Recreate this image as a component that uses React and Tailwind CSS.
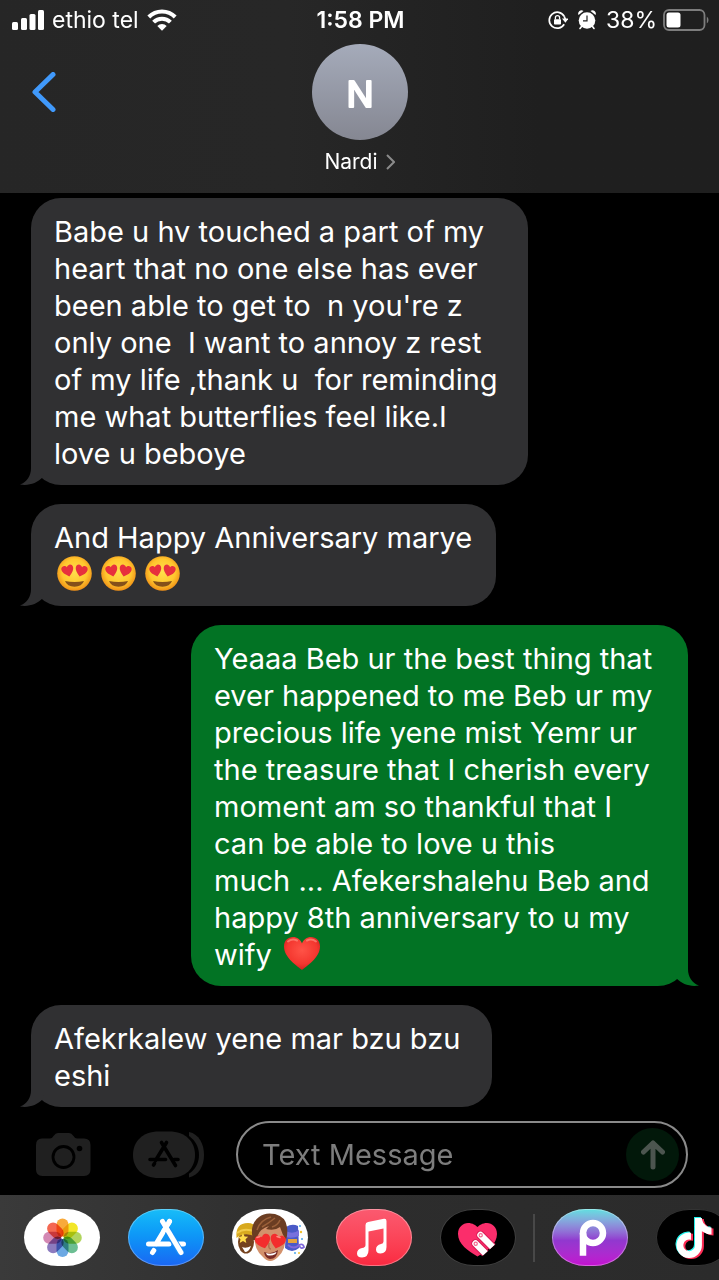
import React from "react";
import { FaTiktok } from "react-icons/fa6";

const HEART = "M12 21.5 C5 16 1 12 1 7.2 C1 3.6 3.7 1.5 6.5 1.5 C9 1.5 11 3 12 5 C13 3 15 1.5 17.5 1.5 C20.3 1.5 23 3.6 23 7.2 C23 12 19 16 12 21.5 Z";

function SignalIcon() {
  return (
    <svg className="h-5 w-8" viewBox="0 0 32 20" fill="#fff" aria-hidden="true">
      <rect x="0" y="12" width="6" height="8" rx="1.5" />
      <rect x="9" y="8" width="6" height="12" rx="1.5" />
      <rect x="17.500" y="4" width="6" height="16" rx="1.5" />
      <rect x="26" y="0" width="6" height="20" rx="1.5" />
    </svg>
  );
}

function WifiIcon() {
  return (
    <svg className="h-[22px] w-[30px]" viewBox="0 0 30 22" fill="none" stroke="#fff" strokeWidth="4" aria-hidden="true">
      <path d="M1.800 8 A18.500 18.500 0 0 1 28.200 8" />
      <path d="M6.600 13.200 A11.800 11.800 0 0 1 23.400 13.200" />
      <path d="M15 21.800 L10.300 17 A6.600 6.600 0 0 1 19.700 17 Z" fill="#fff" stroke="none" />
    </svg>
  );
}

function RotationLockIcon() {
  return (
    <svg className="h-5 w-5" viewBox="0 0 20 20" fill="none" aria-hidden="true">
      <path d="M16.200 6.200 A8 8 0 1 0 16.200 14.200" stroke="#fff" strokeWidth="1.700" />
      <path d="M14 8.500 H20.500 L17.400 12.800 Z" fill="#fff" />
      <path d="M16.200 6.200 L17.400 9.500" stroke="#fff" strokeWidth="1.700" />
      <rect x="6" y="9.200" width="7" height="5.300" rx="0.800" fill="#fff" />
      <path d="M7.400 9.500 V7.800 A2.100 2.100 0 0 1 11.600 7.800 V9.500" stroke="#fff" strokeWidth="1.300" />
    </svg>
  );
}

function AlarmIcon() {
  return (
    <svg className="h-5 w-[18px]" viewBox="0 0 18 20" aria-hidden="true">
      <path d="M0.500 5 A3.300 3.300 0 0 1 5.500 1 Z M17.500 5 A3.300 3.300 0 0 0 12.500 1 Z" fill="#fff" />
      <path d="M3.500 16.500 L2 18.500 M14.500 16.500 L16 18.500" stroke="#fff" strokeWidth="1.600" strokeLinecap="round" />
      <circle cx="9" cy="10.500" r="8.300" fill="#fff" />
      <path d="M9 5.500 V10.800 H5" stroke="#222" strokeWidth="1.200" fill="none" />
    </svg>
  );
}

function BatteryIcon() {
  return (
    <svg className="h-[22px] w-[46px]" viewBox="0 0 46 22" aria-hidden="true">
      <rect x="1" y="1" width="40.500" height="20" rx="5" fill="none" stroke="#7d7d7d" strokeWidth="1.800" />
      <rect x="3.500" y="3.500" width="14" height="15" rx="2.500" fill="#fff" />
      <path d="M43.800 7.500 Q45.500 8.500 45.500 11 Q45.500 13.500 43.800 14.500 Z" fill="#7d7d7d" />
    </svg>
  );
}

function HeartEyes() {
  return (
    <svg className="h-9 w-11" viewBox="0 0 44 36" role="img" aria-label="smiling face with heart eyes">
      <defs>
        <radialGradient id="face" cx="0.5" cy="0.45" r="0.56">
          <stop offset="0" stopColor="#ffdf4c" />
          <stop offset="0.65" stopColor="#ffc72e" />
          <stop offset="1" stopColor="#ef8d16" />
        </radialGradient>
      </defs>
      <circle cx="20.500" cy="17.500" r="17.300" fill="url(#face)" />
      <path d="M11 25 Q20.500 27.200 30 25 Q28 30.700 20.500 30.700 Q13 30.700 11 25 Z" fill="#84501a" />
      <g fill="#e7303d">
        <path d={HEART} transform="translate(5.800 10.300) rotate(-15) scale(0.550 0.570)" />
        <path d={HEART} transform="translate(22.400 6.900) rotate(15) scale(0.550 0.570)" />
      </g>
    </svg>
  );
}

function RedHeart() {
  return (
    <svg className="h-9 w-11" viewBox="0 0 44 36" role="img" aria-label="red heart">
      <defs>
        <radialGradient id="redheart" cx="0.5" cy="0.4" r="0.6">
          <stop offset="0" stopColor="#ff5347" />
          <stop offset="0.7" stopColor="#f4372f" />
          <stop offset="1" stopColor="#d3201f" />
        </radialGradient>
      </defs>
      <path d="M22 34 C18 30.500 4 22 4 10.500 C4 4.500 8 1 13 1 C17 1 20.500 3.500 22 7.500 C23.500 3.500 27 1 31 1 C36 1 40 4.500 40 10.500 C40 22 26 30.500 22 34 Z" fill="url(#redheart)" />
      <path d="M8 5.500 Q12 2.300 17 4.500 M27 4.500 Q32 2.300 36 5.500" fill="none" stroke="#ff9d8c" strokeWidth="2" strokeLinecap="round" opacity="0.6" />
    </svg>
  );
}

function Tail({ sent }) {
  return (
    <svg
      className={sent ? "absolute bottom-0 -right-[11px] h-8 w-6 -scale-x-100" : "absolute bottom-0 -left-[11px] h-8 w-6"}
      viewBox="0 0 24 32"
      fill={sent ? "#027324" : "#303032"}
      aria-hidden="true"
    >
      <path d="M11 0 V15 C11 23 7 29 0 31.500 C9 33 17 30 22.500 24.500 L24 20 V0 Z" />
    </svg>
  );
}

function Bubble({ sent, size, children }) {
  return (
    <li
      className={`relative rounded-[30px] pt-[15px] pb-[13px] pl-[23px] ${sent ? "self-end bg-[#027324]" : "self-start bg-[#303032]"} ${size}`}
    >
      <div className="text-[29px] leading-[37px] whitespace-pre">{children}</div>
      <Tail sent={sent} />
    </li>
  );
}

function CameraIcon() {
  return (
    <svg className="h-11 w-[55px]" viewBox="0 0 55 44" aria-hidden="true">
      <path d="M6 5.500 H14 Q16 5.500 17.500 3 Q19.500 0 22 0 H33 Q35.500 0 37.500 3 Q39 5.500 41 5.500 H48 Q54.500 5.500 54.500 12 V36.500 Q54.500 43 48 43 H6.500 Q0 43 0 36.500 V12 Q0 5.500 6 5.500 Z" fill="#202020" />
      <circle cx="27.500" cy="24" r="10.500" fill="none" stroke="#000" strokeWidth="2.800" />
      <circle cx="43.500" cy="15.500" r="2.800" fill="#000" />
    </svg>
  );
}

function AppsIcon() {
  return (
    <svg className="h-12 w-[72px]" viewBox="0 0 72 48" aria-hidden="true">
      <path d="M56 1 C66 3 71 13 71 24 C71 35 66 44 56 46.500 Z" fill="#202020" />
      <path d="M28 0 H37 C56 0 66 11 66 24 C66 37 56 47.500 37 47.500 H28 Z" fill="#000" />
      <path d="M26 0.500 H36 C53 0.500 62 11 62 24 C62 37 53 47 36 47 H26 C9 47 0 37 0 24 C0 11 9 0.500 26 0.500 Z" fill="#202020" />
      <g stroke="#000" strokeWidth="3.600" strokeLinecap="round" fill="none">
        <path d="M33.500 11.500 L22.500 29.500 M17 28.500 H32.500 M41 28.500 H45 M20.500 34 L21.500 32.500" />
        <path d="M28.500 11.500 L42.500 34.500" />
      </g>
    </svg>
  );
}

const PETALS = ["#f8a125", "#f1e410", "#a9d14c", "#5cb787", "#5c9fe0", "#7f6cb8", "#cf7bab", "#f3573f"];

function PhotosArt() {
  return (
    <svg className="h-full w-full" viewBox="0 0 76 57" aria-hidden="true">
      {PETALS.map((c, i) => (
        <rect key={c} x="32.500" y="9.500" width="12" height="18.500" rx="6" fill={c} opacity="0.900" transform={`rotate(${i * 45} 38.500 28.800)`} style={{ mixBlendMode: "multiply" }} />
      ))}
      <circle cx="38.500" cy="28.800" r="1.200" fill="#fff" />
    </svg>
  );
}

function StoreArt() {
  return (
    <svg className="h-full w-full" viewBox="0 0 76 57" aria-hidden="true">
      <g stroke="#fff" strokeWidth="5" strokeLinecap="round" fill="none">
        <path d="M41.500 12.500 L28 35 M20.500 35 H41 M50 35 H55.500 M24.500 43.500 L25.800 41.500" />
        <path d="M34.500 12.500 L53 44" stroke="#1b8df6" strokeWidth="7" strokeLinecap="butt" />
        <path d="M34.500 12.500 L53 43.500" />
        <path d="M41.500 12.500 L36 21.500" />
      </g>
    </svg>
  );
}

function MemojiArt() {
  return (
    <svg className="h-full w-full" viewBox="0 0 76 57" aria-hidden="true">
      <ellipse cx="14" cy="33" rx="8" ry="11.500" fill="#75431f" />
      <path d="M4.500 29 Q3 14 16 14 Q22 14 24 19 V28 Q13 22 4.500 29 Z" fill="#d8a91e" />
      <path d="M5 24 Q13 18 23 23" stroke="#f1cb4a" strokeWidth="2" fill="none" />
      <path d="M11 24 l1.600 3.400 3.600 .4 -2.700 2.500 .8 3.700 -3.300 -1.900 -3.300 1.900 .8 -3.700 -2.700 -2.500 3.600 -.4 Z" fill="#ffdc4b" />
      <path d="M10 38 Q14 40 19 37 Q17 43 13 43 Z" fill="#fff" />
      <path d="M54 18 Q60 14 66 17 L67 39 Q60 45 53 39 Z" fill="#4a59c7" />
      <path d="M54 22 Q61 26 67 21 V27 Q60 30 54 28 Z" fill="#7770dd" />
      <path d="M56 30 H65 V34 H56 Z" fill="#e5a33d" />
      <path d="M56 36 Q62 41 67 36 Q71 34 72 38 Q69 41 67 36" stroke="#8068db" strokeWidth="1.800" fill="none" />
      <g fill="#4ba7ea"><circle cx="68" cy="17" r="1" /><circle cx="70" cy="30" r="1" /><circle cx="63" cy="44" r="1" /></g>
      <g fill="#f2c230"><circle cx="69" cy="23" r="1.200" /><circle cx="67" cy="44" r="1" /></g>
      <path d="M22 25 Q22 14 38 12 Q54 14 54 25 Q54 41 46 48 Q38 56 31 48 Q22 41 22 25 Z" fill="#d3916b" />
      <path d="M21 31 Q17 15 27 8 Q33 3 43 5 Q54 8 55 18 Q56 25 54 31 Q50 25 48 18 Q43 22 34 20 L37 17 Q28 20 26 26 L24 31 Z" fill="#6b3d22" />
      <path d="M25 21 Q28 11 39 8 M30 18 Q37 14 43 9 M40 18 Q46 16 48 11" stroke="#9b6039" strokeWidth="1.500" fill="none" />
      <path d="M37 34 Q36 40 39 40" stroke="#b4704f" strokeWidth="1.500" fill="none" />
      <path d="M32 43 Q39 46 46 41 Q45 50 38 50 Q33 49 32 43 Z" fill="#792b25" />
      <path d="M34 44 Q39 46 44.500 43 L43.500 45 Q39 47.500 35 46 Z" fill="#fff" />
      <path d={HEART} transform="translate(21 27) rotate(-15) scale(0.700)" fill="#f32d2d" />
      <path d={HEART} transform="translate(39.500 22.800) rotate(15) scale(0.700)" fill="#f32d2d" />
      <path d="M25 28.500 L28 27.500 M45 27.500 L48 28.500" stroke="#ff8b80" strokeWidth="1.500" strokeLinecap="round" />
    </svg>
  );
}

function MusicArt() {
  return (
    <svg className="h-full w-full" viewBox="0 0 76 57" fill="#fff" aria-hidden="true">
      <path d="M29.500 16 Q29.500 13.500 32 13 L48 9.800 Q50.500 9.500 50.500 12 V38 Q50.500 44 44.500 44.500 Q40 44.500 40 40.500 Q40 36 45 35 Q47.500 34.500 47.500 32.500 V19.500 L32.500 22.500 V41.500 Q32.500 48 26 48.500 Q21 48.500 21 44.500 Q21 40 26 39 Q29.500 38.500 29.500 36 Z" />
    </svg>
  );
}

function TouchArt() {
  return (
    <svg className="h-full w-full" viewBox="0 0 76 57" aria-hidden="true">
      <defs>
        <clipPath id="touchheart"><path d="M0 0 H60 V31 L38 51 H0 Z" /></clipPath>
      </defs>
      <path d="M37.500 47.500 C28 42 18 35 18 25 C18 18 23 14 28 14 C32.500 14 36 16.500 37.500 18 C39 16.500 42.500 14 47 14 C52 14 57 18 57 25 C57 35 47 42 37.500 47.500 Z" fill="#fb2d6b" />
      <g clipPath="url(#touchheart)" fill="none" strokeLinecap="round">
        <path d="M40.500 26 L56 41.500 M35.500 34.500 L49 48" stroke="#d81b55" strokeWidth="8.500" />
        <path d="M40.500 26 L56 41.500 M35.500 34.500 L49 48" stroke="#fff" strokeWidth="6.500" />
      </g>
      <circle cx="40.700" cy="26.200" r="1.600" fill="none" stroke="#f46a91" strokeWidth="1.200" />
      <circle cx="35.700" cy="34.700" r="1.600" fill="none" stroke="#f46a91" strokeWidth="1.200" />
    </svg>
  );
}

function PicsartArt() {
  return (
    <svg className="h-full w-full" viewBox="0 0 76 57" fill="none" stroke="#fff" aria-hidden="true">
      <circle cx="41" cy="24" r="10" strokeWidth="6.500" />
      <path d="M31 24 V46.800" strokeWidth="6.500" />
    </svg>
  );
}

function TiktokArt() {
  return (
    <span className="grid h-full w-full place-items-center" aria-hidden="true">
      <FaTiktok className="col-start-1 row-start-1 mr-[3px] mb-[2px] h-10 w-9 text-[#25f4ee]" />
      <FaTiktok className="col-start-1 row-start-1 mt-[2px] ml-[3px] h-10 w-9 text-[#fe2c55]" />
      <FaTiktok className="col-start-1 row-start-1 h-10 w-9 text-white" />
    </span>
  );
}

function AppButton({ label, tone, children }) {
  return (
    <button type="button" aria-label={label} className={`h-[57px] w-[76px] shrink-0 overflow-hidden rounded-[34px/29px] ${tone}`}>
      {children}
    </button>
  );
}

export default function App() {
  return (
    <div className="flex min-h-screen flex-col overflow-hidden bg-black font-['Inter','Liberation_Sans',sans-serif] text-white">
      <header className="bg-linear-to-r from-[#262626] via-[#272727] via-40% to-[#1f1f1f] to-75% pb-[18px]">
        <div className="grid h-10 grid-cols-[1fr_auto_1fr] items-center pr-[10px] pl-3 text-[23px] leading-6">
          <div className="flex items-center gap-2">
            <SignalIcon />
            <span>ethio tel</span>
            <WifiIcon />
          </div>
          <time className="font-semibold">1:58 PM</time>
          <div className="flex items-center justify-end gap-[10px]">
            <RotationLockIcon />
            <AlarmIcon />
            <div className="flex items-center gap-[6px]">
              <span>38%</span>
              <BatteryIcon />
            </div>
          </div>
        </div>
        <div className="grid grid-cols-[1fr_auto_1fr] pt-1">
          <button type="button" aria-label="Back" className="mt-7 ml-8 h-10 w-6">
            <svg className="h-10 w-6" viewBox="0 0 24 40" fill="none" stroke="#4099fb" strokeWidth="5" strokeLinecap="round" strokeLinejoin="round">
              <path d="M21 2.500 L3 20 L21 37.500" />
            </svg>
          </button>
          <button type="button" className="flex flex-col items-center gap-[9px]">
            <svg className="h-24 w-24 rounded-full bg-linear-to-b from-[#a5abba] to-[#858792]" viewBox="0 0 96 96" aria-hidden="true">
              <text x="48" y="63" textAnchor="middle" fontSize="36" fontWeight="400" fill="#fff" stroke="#fff" strokeWidth="2.200" strokeLinejoin="round">N</text>
            </svg>
            <span className="flex items-center gap-2 text-[21px] leading-[26px]">
              Nardi
              <svg className="h-4 w-[9px]" viewBox="0 0 9 16" fill="none" stroke="#8b8b8b" strokeWidth="2" aria-hidden="true">
                <path d="M1 1 L8 8 L1 15" />
              </svg>
            </span>
          </button>
        </div>
      </header>

      <main className="flex-1 pt-[5px]">
        <ul className="flex flex-col gap-[19px] px-[31px]">
          <Bubble size="w-full max-w-[497px]">
            {"Babe u hv touched a part of my\nheart that no one else has ever\nbeen able to get to  n you're z\nonly one  I want to annoy z rest\nof my life ,thank u  for reminding\nme what butterflies feel like.I\nlove u beboye"}
          </Bubble>
          <Bubble size="w-fit pr-6">
            And Happy Anniversary marye
            <span className="flex h-[37px] items-start">
              <HeartEyes />
              <HeartEyes />
              <HeartEyes />
            </span>
          </Bubble>
          <Bubble sent size="w-full max-w-[497px]">
            {"Yeaaa Beb ur the best thing that\never happened to me Beb ur my\nprecious life yene mist Yemr ur\nthe treasure that I cherish every\nmoment am so thankful that I\ncan be able to love u this\nmuch ... Afekershalehu Beb and\nhappy 8th anniversary to u my"}
            <span className="flex h-[37px] items-start gap-2">
              wify
              <RedHeart />
            </span>
          </Bubble>
          <Bubble size="w-fit pr-8">{"Afekrkalew yene mar bzu bzu\neshi"}</Bubble>
        </ul>
      </main>

      <form className="flex items-center pt-[14px] pr-[31px] pb-[7px] pl-9" onSubmit={(e) => e.preventDefault()}>
        <button type="button" aria-label="Camera"><CameraIcon /></button>
        <button type="button" aria-label="Apps" className="ml-[42px]"><AppsIcon /></button>
        <div className="ml-[31px] flex h-[67px] min-w-0 flex-1 items-center rounded-full border-2 border-[#8a8a8a] pr-[7px] pl-6">
          <input type="text" aria-label="Text Message" placeholder="Text Message" className="min-w-0 flex-1 bg-transparent text-[29px] leading-9 outline-none placeholder:text-[#7d7d7d]" />
          <button type="submit" aria-label="Send" className="grid h-[53px] w-[53px] shrink-0 place-items-center rounded-full bg-[#02180a]">
            <svg className="h-[30px] w-6" viewBox="0 0 24 30" fill="none" stroke="#4c554f" strokeWidth="5" strokeLinecap="round" strokeLinejoin="round">
              <path d="M12 27 V3 M2.500 12 L12 3 L21.500 12" />
            </svg>
          </button>
        </div>
      </form>

      <nav aria-label="Message apps" className="flex items-start gap-7 overflow-hidden bg-linear-to-r from-[#3a3a3a] via-[#2d2d2d] via-45% to-[#2b2b2b] pt-[14px] pb-[14px] pl-6">
        <AppButton label="Photos" tone="bg-white"><PhotosArt /></AppButton>
        <AppButton label="App Store" tone="bg-linear-to-b from-[#19bdf8] to-[#1b66f3] ring-1 ring-inset ring-white/30"><StoreArt /></AppButton>
        <AppButton label="Memoji" tone="bg-white"><MemojiArt /></AppButton>
        <AppButton label="Music" tone="bg-linear-to-b from-[#fb5a70] to-[#fa2840] ring-1 ring-inset ring-white/35"><MusicArt /></AppButton>
        <div className="flex items-center gap-[17px]">
          <AppButton label="Digital Touch" tone="bg-black ring-1 ring-inset ring-white/25"><TouchArt /></AppButton>
          <span className="h-12 w-[2px] bg-[#484848]" />
          <AppButton label="Picsart" tone="bg-linear-to-b from-[#5ee0e0] via-[#9138cf] via-55% to-[#c40ccf] ring-1 ring-inset ring-white/35"><PicsartArt /></AppButton>
        </div>
        <AppButton label="TikTok" tone="bg-black ring-1 ring-inset ring-white/20"><TiktokArt /></AppButton>
      </nav>
    </div>
  );
}
